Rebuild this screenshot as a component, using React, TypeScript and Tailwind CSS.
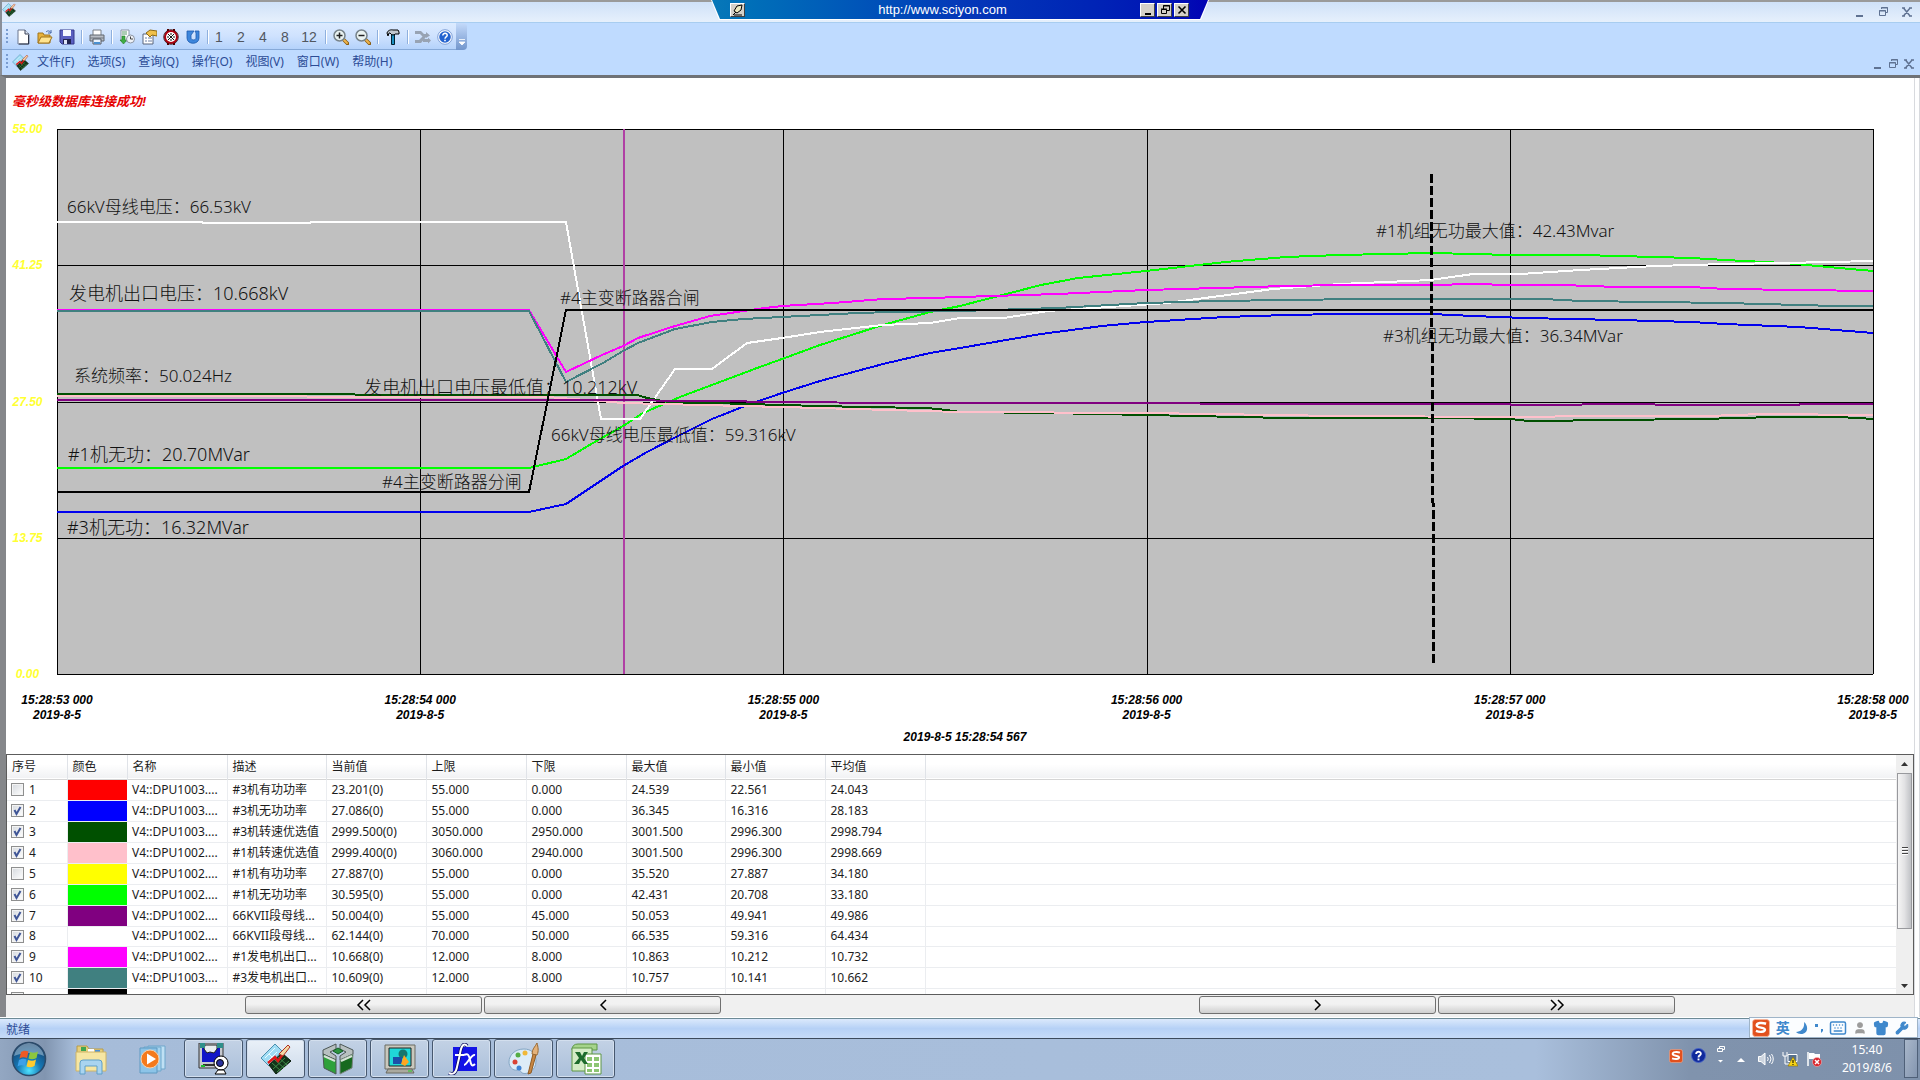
import React from 'react';
import { clsx } from 'clsx';
import { Keyboard, Shirt, User, Wrench } from 'lucide-react';

const UI_FONT = "font-['Noto_Sans','Noto_Sans_CJK_SC',sans-serif]";
const ARIAL = "font-['Liberation_Sans','Noto_Sans_CJK_SC',sans-serif]";

/* ---------- data ---------- */

const PLOT_W = 1816;
const PLOT_H = 545;

const yTicks = ['55.00', '41.25', '27.50', '13.75', '0.00'];

const xTicks = [
  '15:28:53 000',
  '15:28:54 000',
  '15:28:55 000',
  '15:28:56 000',
  '15:28:57 000',
  '15:28:58 000',
];

const series = [
  {
    color: '#00ff00',
    points:
      '0,339 472,339 509,330 536,314 566,297 586,284 623,268 663,253 700,239 725,230 763,216 826,196 873,183 903,177 984,156 1021,149 1089,142 1168,133 1229,128 1283,126 1374,124 1416,125 1453,126 1524,126 1561,127 1598,128 1635,129 1668,131 1727,134 1816,142',
  },
  {
    color: '#0000ee',
    points:
      '0,383 472,383 509,375 515,371 566,337 590,323 623,306 655,290 693,275 725,264 763,252 826,235 873,224 903,219 984,205 1045,197 1089,193 1168,188 1229,186 1283,185 1374,185 1416,187 1468,189 1561,191 1635,193 1668,195 1742,198 1816,204',
  },
  {
    color: '#ffffff',
    points:
      '0,93 145,93 146,94 253,94 254,93 490,93 491,93 509,93 544,290 583,290 618,240 655,240 690,214 725,209 763,203 826,196 873,194 903,189 947,189 991,182 1082,176 1110,174 1216,160 1283,155 1374,151 1416,145 1464,145 1524,141 1598,137 1669,135 1727,134 1816,132',
  },
  {
    color: '#ff00ff',
    points:
      '0,181 472,181 509,243 545,226 566,217 581,209 618,197 653,187 680,183 700,180 725,177 776,174 826,170 873,169 903,168 1000,165 1089,161 1160,159 1229,157 1283,156 1374,156 1416,155 1453,156 1505,156 1561,158 1635,158 1668,160 1742,161 1816,162',
  },
  {
    color: '#408080',
    points:
      '0,182 472,182 509,253 546,234 566,222 581,214 618,200 655,193 686,190 725,188 763,186 800,184 836,183 903,182 1000,179 1089,174 1160,172 1229,171 1306,170 1487,170 1524,172 1598,173 1668,174 1742,176 1779,177 1816,177',
  },
  {
    color: '#005000',
    points:
      '0,265 580,266 590,269 605,272 623,274 655,274 725,276 763,277 806,278 870,279 890,281 903,283 990,284 1089,286 1229,289 1379,289 1453,290 1472,292 1561,291 1635,290 1690,289 1709,288 1779,288 1802,289 1816,290',
  },
  {
    color: '#ffc0cb',
    points:
      '0,267 490,268 543,272 566,274 725,278 903,283 1089,284 1283,287 1453,288 1472,288 1524,287 1650,287 1705,285 1816,286',
  },
  {
    color: '#800080',
    points:
      '0,271 543,271 653,272 725,273 835,274 1000,274 1283,275 1453,275 1454,276 1524,276 1526,275 1596,275 1600,276 1742,276 1743,275 1816,275',
  },
  { color: '#000000', points: '0,363 472,363 509,181 1816,181' },
];

const annotations = [
  { x: 10, y: 77, text: '66kV母线电压：66.53kV' },
  { x: 12, y: 164, text: '发电机出口电压：10.668kV', large: true },
  { x: 17, y: 246, text: '系统频率：50.024Hz' },
  { x: 11, y: 325, text: '#1机无功：20.70MVar', large: true },
  { x: 10, y: 398, text: '#3机无功：16.32MVar', large: true },
  { x: 325, y: 352, text: '#4主变断路器分闸' },
  { x: 503, y: 168, text: '#4主变断路器合闸' },
  { x: 307, y: 258, text: '发电机出口电压最低值：10.212kV', large: true },
  { x: 494, y: 305, text: '66kV母线电压最低值：59.316kV' },
  { x: 1319, y: 101, text: '#1机组无功最大值：42.43Mvar' },
  { x: 1326, y: 206, text: '#3机组无功最大值：36.34MVar' },
];

const columns = ['序号', '颜色', '名称', '描述', '当前值', '上限', '下限', '最大值', '最小值', '平均值'];

type Row = { on: boolean; color: string; cells: string[] };

const rows: Row[] = [
  { on: false, color: 'bg-[#ff0000]', cells: ['V4::DPU1003....', '#3机有功功率', '23.201(0)', '55.000', '0.000', '24.539', '22.561', '24.043'] },
  { on: true, color: 'bg-[#0000ff]', cells: ['V4::DPU1003....', '#3机无功功率', '27.086(0)', '55.000', '0.000', '36.345', '16.316', '28.183'] },
  { on: true, color: 'bg-[#005000]', cells: ['V4::DPU1003....', '#3机转速优选值', '2999.500(0)', '3050.000', '2950.000', '3001.500', '2996.300', '2998.794'] },
  { on: true, color: 'bg-[#ffc0cb]', cells: ['V4::DPU1002....', '#1机转速优选值', '2999.400(0)', '3060.000', '2940.000', '3001.500', '2996.300', '2998.669'] },
  { on: false, color: 'bg-[#ffff00]', cells: ['V4::DPU1002....', '#1机有功功率', '27.887(0)', '55.000', '0.000', '35.520', '27.887', '34.180'] },
  { on: true, color: 'bg-[#00ff00]', cells: ['V4::DPU1002....', '#1机无功功率', '30.595(0)', '55.000', '0.000', '42.431', '20.708', '33.180'] },
  { on: true, color: 'bg-[#800080]', cells: ['V4::DPU1002....', '66KVII段母线...', '50.004(0)', '55.000', '45.000', '50.053', '49.941', '49.986'] },
  { on: true, color: 'bg-white', cells: ['V4::DPU1002....', '66KVII段母线...', '62.144(0)', '70.000', '50.000', '66.535', '59.316', '64.434'] },
  { on: true, color: 'bg-[#ff00ff]', cells: ['V4::DPU1002....', '#1发电机出口...', '10.668(0)', '12.000', '8.000', '10.863', '10.212', '10.732'] },
  { on: true, color: 'bg-[#408080]', cells: ['V4::DPU1003....', '#3发电机出口...', '10.609(0)', '12.000', '8.000', '10.757', '10.141', '10.662'] },
  { on: true, color: 'bg-black', cells: ['', '', '', '', '', '', '', ''] },
];

const menus = ['文件(F)', '选项(S)', '查询(Q)', '操作(O)', '视图(V)', '窗口(W)', '帮助(H)'];

/* ---------- icons ---------- */

const AppIcon = ({ className }: { className: string }) => (
  <svg viewBox="0 0 32 32" className={className}>
    <path d="M1 15 15 1l7 7L9 23z" fill="#9fdcf4" stroke="#4a8fae" />
    <path d="M5 15 15 5M8 18l9-9M9 11l6 6" stroke="#e8fbff" />
    <path d="M9 22 22 10l9 8-15 13z" fill="#123318" stroke="#0a1d0d" />
    <path d="m12 20 9 8M15 17l9 8M18 14l9 8M13 26l12-11M17 29l12-11" stroke="#3f8a4a" />
    <path d="m8 20 7-6 3 4 5-7" fill="none" stroke="#e01818" strokeWidth="2.5" />
    <path d="m19 11 9-9 2 2-7 9z" fill="#f3d6a2" stroke="#b03020" />
  </svg>
);

const NewIcon = () => (
  <svg viewBox="0 0 16 16" className="size-4">
    <path d="M3 1h7l4 4v10H3z" fill="#fff" stroke="#6a7690" />
    <path d="M10 1v4h4" fill="#dfe7f5" stroke="#3a4258" />
    <path d="M13.500 6v9H4" fill="none" stroke="#2f3648" />
  </svg>
);

const OpenIcon = () => (
  <svg viewBox="0 0 16 16" className="size-4">
    <path d="M1 14V4h5l1 2h6v8z" fill="#e8b23a" stroke="#a0741c" />
    <path d="m1 14 3-6h11l-3 6z" fill="#ffe48f" stroke="#a0741c" />
    <path d="M9 3c2-2 4-1 5 1m0-3v3h-3" fill="none" stroke="#4668a8" />
  </svg>
);

const SaveIcon = () => (
  <svg viewBox="0 0 16 16" className="size-4">
    <path d="M1 1h14v14H3l-2-2z" fill="#5a5fc0" stroke="#34388c" />
    <path d="M4 1h8v6H4z" fill="#f4f6ff" />
    <path d="M4 10h8v5H4z" fill="#22244f" />
    <path d="M5 11h3v4H5z" fill="#dfe4f8" />
  </svg>
);

const PrintIcon = () => (
  <svg viewBox="0 0 16 16" className="size-4">
    <path d="M4 1h8v6H4z" fill="#fff" stroke="#7a8088" />
    <path d="M1 6h14v6H1z" fill="#b9bec6" stroke="#60666e" />
    <path d="M1 9h14" stroke="#70767e" />
    <path d="M4 10h8v5H4z" fill="#e9f2fd" stroke="#555b64" />
    <path d="M5 13h6v2H5z" fill="#4a90d0" />
  </svg>
);

const ReportIcon = () => (
  <svg viewBox="0 0 16 16" className="size-4">
    <path d="M2 1h8v11H2z" fill="#fff" stroke="#8b95a5" />
    <path d="M3 3h5M3 5h5" stroke="#5a9a6a" />
    <path d="M3 7h3v4h2l-3.500 4L1 11h2z" fill="#3fae44" stroke="#237a2a" strokeWidth=".6" />
    <circle cx="11.500" cy="10" r="4" fill="#eef2f8" stroke="#8c95a3" />
    <path d="M11.500 7.500V10H14" fill="none" stroke="#444" />
  </svg>
);

const PropertyIcon = () => (
  <svg viewBox="0 0 16 16" className="size-4">
    <path d="M2 5h10v10H2z" fill="#fff" stroke="#59657c" />
    <path d="M4 9h2m1 0h4M4 12h2m1 0h4" stroke="#6d7fa5" />
    <path d="M5 4 9 1l7 1v5l-5-1-2 2z" fill="#f0c04a" stroke="#8d6a16" />
  </svg>
);

const ClockIcon = () => (
  <svg viewBox="0 0 16 16" className="size-4">
    <path d="M4 0h2v3H4zM10 0h2v3h-2zM4 13h2v3H4zM10 13h2v3h-2z" fill="#500" />
    <circle cx="8" cy="8" r="6" fill="#fff" stroke="#b00010" strokeWidth="2" />
    <circle cx="8" cy="8" r="7.300" fill="none" stroke="#300" strokeWidth=".8" />
    <path d="m5 5 6 6m0-6-6 6M8 4v2M8 10v2M4 8h2m4 0h2" stroke="#111" />
  </svg>
);

const RefreshIcon = () => (
  <svg viewBox="0 0 16 16" className="size-4">
    <path d="M2 2v7c0 7 12 7 12 0V2h-4l1 2v5c0 2.500-5 2.500-5 0V6l3-4z" fill="#3d86dc" stroke="#205cae" strokeWidth=".8" />
  </svg>
);

const ZoomIcon = ({ plus }: { plus?: boolean }) => (
  <svg viewBox="0 0 16 16" className="size-4">
    <path d="m10 10 4.500 4.500" stroke="#8a5d12" strokeWidth="3.500" strokeLinecap="round" />
    <path d="m11 11 3 3" stroke="#efb44c" strokeWidth="2" strokeLinecap="round" />
    <circle cx="6.500" cy="6.500" r="5.500" fill="#eaf3f2" stroke="#77838a" strokeWidth="1.500" />
    <path d={plus ? 'M3.500 6.500h6M6.500 3.500v6' : 'M3.500 6.500h6'} stroke="#222" strokeWidth="1.500" />
  </svg>
);

const HammerIcon = () => (
  <svg viewBox="0 0 16 16" className="size-4">
    <path d="M2 4c1-3 4-3.500 6-3h5l1 2v2h-4l-1 1H7L5 4H4L3 7z" fill="#c2c8cf" stroke="#000" />
    <path d="M6.500 6h3v9.500h-3z" fill="#1c8fc0" stroke="#02202e" />
  </svg>
);

const ShuffleIcon = () => (
  <svg viewBox="0 0 16 16" className="size-4" fill="#98a3b3">
    <path d="M0 2h6l3 3h2V3l4 3.500L11 9V8H8L5 5H0z" />
    <path d="M0 11h4l5-5 2 2-5 6H0z" />
    <path d="M8 10h5V8.500l3 3-3 3V13H8z" />
  </svg>
);

const HelpIcon = () => (
  <svg viewBox="0 0 16 16" className="size-4">
    <circle cx="8" cy="8" r="7.300" fill="#fff" stroke="#7f9fd6" />
    <circle cx="8" cy="8" r="5.800" fill="#2463cf" />
    <path d="M5.800 6.500C5.800 3.500 10.500 3.800 10.200 6.400 10 8 8 7.800 8 9.700" fill="none" stroke="#fff" strokeWidth="1.500" />
    <path d="M7.200 10.800h1.600v1.500H7.200z" fill="#fff" />
  </svg>
);

const SogouIcon = ({ className }: { className: string }) => (
  <svg viewBox="0 0 16 16" className={className}>
    <rect x=".5" y=".5" width="15" height="15" rx="2.500" fill="#e2501d" stroke="#f7b79c" strokeWidth=".6" />
    <path d="M12.500 4.200C9 3 4 3.200 4.200 5.800c.2 2.400 7.400 1.300 7.300 3.800-.1 2.300-5 2.200-8 1" fill="none" stroke="#fff" strokeWidth="2.200" />
  </svg>
);

const StartOrb = () => (
  <svg viewBox="0 0 36 36" className="size-9">
    <defs>
      <radialGradient id="orb" cx="50%" cy="85%" r="80%">
        <stop offset="0" stopColor="#4fe3ff" />
        <stop offset=".45" stopColor="#1577b4" />
        <stop offset="1" stopColor="#17406c" />
      </radialGradient>
    </defs>
    <circle cx="18" cy="18" r="16.500" fill="url(#orb)" stroke="#2c4a69" strokeWidth="1.500" />
    <path d="M3 15C5 5 14 2 18 2s13 3 15 13c-8-4-21-4-30 0z" fill="#cfe2ee" opacity=".45" />
    <path d="M10 11c3-2 5-1.500 7.500-.5L16 17c-2.500-1-5-1-7.500.5z" fill="#ee5a24" />
    <path d="M19 11c3 1 5 1 8-.5L25.500 17c-3 1.500-5 1.500-8 .5z" fill="#8cc63e" />
    <path d="M8 19c3-1.500 5-1.500 7.500-.5L14 25c-2.500-1-5-1-7.500.5z" fill="#3da0e8" />
    <path d="M17 19c3 1 5.500 1 8-.5L23.500 25c-3 1.500-5.500 1.500-8 .5z" fill="#ffcb2e" />
  </svg>
);

const FolderIcon = () => (
  <svg viewBox="0 0 32 32" className="size-8">
    <path d="M2 3h10l2 3h14v6H2z" fill="#e7cf7c" stroke="#b89c48" />
    <path d="M6 4h5v4H6z" fill="#3fa650" />
    <path d="M13 6h6v3h-6z" fill="#fff" />
    <path d="M20 7h5v3h-5z" fill="#4a90d8" />
    <path d="M1 9h30v19H1z" fill="#f6e6a3" stroke="#cdb468" />
    <path d="M5 31V20q0-3 3-3h16q3 0 3 3v11h-5v-8H10v8z" fill="#a9d4f0" stroke="#5f9fc8" />
  </svg>
);

const PlayerIcon = () => (
  <svg viewBox="0 0 32 32" className="size-8">
    <path d="M11 3h17v23H11z" fill="#bfe0f4" stroke="#6ea7cc" />
    <path d="M7 4h17v24H7z" fill="#a6d3ee" stroke="#6ea7cc" />
    <path d="M3 5h17v25H3z" fill="#8cc4e8" stroke="#5e9ac2" />
    <circle cx="13" cy="16" r="9" fill="#f47a1c" stroke="#fbd1a8" />
    <path d="M10 10.500v11l9-5.500z" fill="#fff" />
  </svg>
);

const MonitorIcon = () => (
  <svg viewBox="0 0 32 32" className="size-8">
    <path d="M1 0h24v25H1z" fill="#c6c9cf" stroke="#333" />
    <path d="M4 2h18v17H4z" fill="#1116c8" />
    <path d="M7 2h12v4l-3 4-4-1-3 1-3-4z" fill="#e9eef0" stroke="#222" />
    <path d="M2 0h5v5H2zM19 0h6v5h-6z" fill="#2f8f8a" />
    <path d="M5 21h16v2H5z" fill="#333" />
    <path d="M3 22h4v2H3z" fill="#20c030" />
    <circle cx="23" cy="20" r="7" fill="#fff" stroke="#000" />
    <circle cx="22" cy="20" r="3.500" fill="#28309c" stroke="#000" />
    <path d="m20 27-3 4h11l-2-4z" fill="#fff" stroke="#000" />
  </svg>
);

const CubeIcon = () => (
  <svg viewBox="0 0 32 32" className="size-8">
    <path d="M1 7 14 1v5L8 9l6 4v4L1 11zM31 7 18 1v5l6 3-6 4v4l13-6z" fill="#b8c0c0" stroke="#4c5654" />
    <path d="m11 8 5-3 5 3-5 3z" fill="#2c9440" stroke="#145f25" />
    <path d="m1 11 13 6v14L2 25z" fill="#2ea13a" stroke="#4c5654" />
    <path d="m31 11-13 6v14l12-6z" fill="#17691f" stroke="#7c8684" />
    <path d="m2 13 11 5M30 13l-11 5" stroke="#d6e4d8" strokeWidth="2" />
  </svg>
);

const ScreenIcon = () => (
  <svg viewBox="0 0 32 32" className="size-8">
    <path d="M1 2h30v24H1z" fill="#c9c8bd" stroke="#6a6a62" />
    <path d="M4 26h24l2 4H2z" fill="#aaa99f" stroke="#6a6a62" />
    <path d="M5 5h22v18H5z" fill="#20d8d8" stroke="#222" />
    <circle cx="19" cy="11" r="4.500" fill="#16766e" />
    <path d="M9 14h9v7H9z" fill="#1b50a8" />
    <path d="m17 21 3-9 5 7-4 4z" fill="#ffa620" />
    <path d="M24 28h4" stroke="#2c2" />
  </svg>
);

const FxIcon = () => (
  <svg viewBox="0 0 32 32" className="size-8">
    <path d="M7 4h24v24H7z" fill="#1414e6" />
    <path d="M21 3c-3-4-6 0-7 8l-3 13c-1 6-4 8-8 6" fill="none" stroke="#0a0a60" strokeWidth="3.500" />
    <path d="M21 3c-3-4-6 0-7 8l-3 13c-1 6-4 8-8 6M9 12h9" fill="none" stroke="#fff" strokeWidth="2" />
    <path d="M18 12c4-2 5 0 6 5s2 7 5 4M29 12c-4-1-8 10-11 10" fill="none" stroke="#fff" strokeWidth="2" />
  </svg>
);

const PaletteIcon = () => (
  <svg viewBox="0 0 32 32" className="size-8">
    <path d="M16 6C7 6 1 12 1 19c0 5 4 9 8 8 3-1 3 1 5 3 5 2 14-2 14-12 0-8-5-12-12-12z" fill="#dcecf8" stroke="#84a6c4" />
    <circle cx="7" cy="19" r="2.500" fill="#d94234" />
    <circle cx="10" cy="12" r="2.500" fill="#55ad45" />
    <circle cx="17" cy="10" r="2.500" fill="#f0b838" />
    <circle cx="11" cy="25" r="2.500" fill="#3d82d4" />
    <path d="m25 11 3 1-5 18-3 1z" fill="#c98742" stroke="#8f5a22" />
    <path d="M24 11c0-5 3-7 5-11 1 4 2 8 0 12z" fill="#e4b27a" stroke="#9a6a34" />
  </svg>
);

const ExcelIcon = () => (
  <svg viewBox="0 0 32 32" className="size-8">
    <path d="M2 7q0-6 6-6h19v6H2z" fill="#a5d38b" stroke="#5c9645" />
    <path d="M2 5h20v23H2z" fill="#d4ecc6" stroke="#5c9645" />
    <path d="M15 11h16v20H15z" fill="#fff" stroke="#5c9645" />
    <path d="M17 14h5v4h-5zM24 14h5v4h-5zM17 20h5v4h-5zM24 20h5v4h-5zM17 26h5v3h-5zM24 26h5v3h-5z" fill="#8cc572" />
    <path d="M5 9h5l2 4 2-4h4l-4 6 4 6h-4l-3-4-2 4H4l5-6z" fill="#1d6b2c" />
  </svg>
);

/* ---------- window chrome ---------- */

const Caption = ({ className }: { className?: string }) => (
  <div className={clsx('flex items-center text-[#5f7292]', className)}>
    <button type="button" aria-label="最小化" className="size-3">
      <svg viewBox="0 0 12 12" className="size-3"><path d="M3 9h7v2H3z" fill="currentColor" /></svg>
    </button>
    <button type="button" aria-label="还原" className="size-3">
      <svg viewBox="0 0 12 12" className="size-3" fill="none" stroke="currentColor">
        <path d="M4.500 3V1.500h6v5H9M4 2h7" />
        <path d="M2.500 4.500h6v5h-6zM2 5h7" />
      </svg>
    </button>
    <button type="button" aria-label="关闭" className="size-3">
      <svg viewBox="0 0 12 12" className="size-3"><path d="m2.500 2 6.500 8M9 2l-6.500 8M1 2h3M8 2h3M1 10h3M8 10h3" stroke="currentColor" strokeWidth="1.500" /></svg>
    </button>
  </div>
);

const classicButton = 'flex h-[14px] w-[15px] items-center justify-center border border-t-white border-r-[#404040] border-b-[#404040] border-l-white bg-[#d4d0c8]';

const RemoteBar = () => (
  <div className="absolute top-0 left-1/2 h-5 w-[498px] -translate-x-1/2 bg-white [clip-path:polygon(0_0,100%_0,490px_100%,8px_100%)]">
    <div className="flex h-[19px] items-center bg-linear-to-r from-[#0878b8] via-[#0638b8] to-[#0202b4] pr-5 pl-[19px] [clip-path:polygon(1px_0,497px_0,489px_100%,9px_100%)]">
      <button type="button" aria-label="固定" className={classicButton}>
        <svg viewBox="0 0 12 12" className="size-3"><path d="m5 2 5-1-1 5-4 3-3-2z" fill="#ece8c0" stroke="#000" /><path d="m1 11 3-3M2 11h8" stroke="#000" /></svg>
      </button>
      <span className={clsx('flex-1 text-center text-[13px] text-white', ARIAL)}>http://www.sciyon.com</span>
      <div className="flex gap-0.5">
        <button type="button" aria-label="最小化" className={classicButton}>
          <svg viewBox="0 0 12 12" className="size-3"><path d="M3 9h6v2H3z" /></svg>
        </button>
        <button type="button" aria-label="还原" className={classicButton}>
          <svg viewBox="0 0 12 12" className="size-3" fill="none" stroke="#000"><path d="M4.500 5V1.500h6v5H8M4 2h7M2.500 5.500h5v4h-5zM2 5h6" /></svg>
        </button>
        <button type="button" aria-label="关闭" className={classicButton}>
          <svg viewBox="0 0 12 12" className="size-3"><path d="m2.500 2.500 7 7m0-7-7 7" stroke="#000" strokeWidth="1.600" /></svg>
        </button>
      </div>
    </div>
  </div>
);

const Tool = ({ label, children }: { label: string; children: React.ReactNode }) => (
  <button type="button" aria-label={label} className="flex h-full w-[22px] items-center justify-center">
    {children}
  </button>
);

const Sep = () => <div className="mx-[3px] h-[14px] w-0.5 border-r border-r-white bg-[#8fb0de]" />;

const Grip = () => <div className="h-4 w-0.5 bg-[repeating-linear-gradient(#7a9cd0_0_2px,transparent_2px_4px)]" />;

const Toolbar = () => (
  <div className="flex h-[27px] bg-[#bfdbff]">
    <div className="flex items-center border-b border-[#86a9d8] bg-linear-to-b from-[#dcebff] via-[#cfe2fe] to-[#b4d2fb] pt-px pl-1">
      <Grip />
      <div className="flex h-full items-center pl-1">
        <Tool label="新建"><NewIcon /></Tool>
        <Tool label="打开"><OpenIcon /></Tool>
        <Tool label="保存"><SaveIcon /></Tool>
        <Sep />
        <Tool label="打印"><PrintIcon /></Tool>
        <Sep />
        <Tool label="报表"><ReportIcon /></Tool>
        <Tool label="属性"><PropertyIcon /></Tool>
        <Tool label="时间"><ClockIcon /></Tool>
        <Tool label="刷新"><RefreshIcon /></Tool>
        <Sep />
        <div className="-ml-1 flex">
          {['1', '2', '4', '8'].map((n) => (
            <button key={n} type="button" className={clsx('w-[22px] text-sm text-[#51565f]', ARIAL)}>{n}</button>
          ))}
          <button type="button" className={clsx('w-[26px] text-sm text-[#51565f]', ARIAL)}>12</button>
        </div>
        <Sep />
        <Tool label="放大"><ZoomIcon plus /></Tool>
        <Tool label="缩小"><ZoomIcon /></Tool>
        <Sep />
        <Tool label="设置"><HammerIcon /></Tool>
        <Sep />
        <Tool label="切换"><ShuffleIcon /></Tool>
        <Tool label="帮助"><HelpIcon /></Tool>
      </div>
    </div>
    <button type="button" aria-label="更多" className="flex w-[11px] items-end justify-center rounded-r bg-linear-to-b from-[#c4dafa] to-[#7296cc] pb-1">
      <svg viewBox="0 0 8 8" className="size-2"><path d="M1 1.500h6M1 4h6L4 7z" fill="#fff" stroke="#fff" strokeWidth=".8" /></svg>
    </button>
  </div>
);

const MenuBar = () => (
  <div className="flex h-[25px] items-center bg-[#bfdbff] pr-[5px] pb-px pl-1">
    <Grip />
    <AppIcon className="mr-2 ml-1 size-[17px]" />
    <nav className="flex flex-1 gap-[13px]">
      {menus.map((m) => (
        <button key={m} type="button" className="text-xs text-[#2c4c96]">{m}</button>
      ))}
    </nav>
    <Caption className="gap-1 pt-1" />
  </div>
);

/* ---------- trend chart ---------- */

const Plot = () => (
  <div className="relative flex-1 bg-[#c0c0c0]">
    <svg viewBox={`0 0 ${PLOT_W} ${PLOT_H}`} preserveAspectRatio="none" shapeRendering="crispEdges" className="block size-full overflow-visible">
      {[0, 1, 2, 3, 4].map((i) => (
        <line key={i} x1="0" x2={PLOT_W} y1={Math.round((i * PLOT_H) / 4) + 0.5} y2={Math.round((i * PLOT_H) / 4) + 0.5} stroke="#000" />
      ))}
      {[0, 1, 2, 3, 4, 5].map((i) => (
        <line key={i} y1="0" y2={PLOT_H} x1={Math.round((i * PLOT_W) / 5) + 0.5} x2={Math.round((i * PLOT_W) / 5) + 0.5} stroke="#000" />
      ))}
      <line x1="567" x2="567" y1="0" y2={PLOT_H} stroke="#b040a4" strokeWidth="2" />
      {series.map((s) => (
        <polyline key={s.color} points={s.points} fill="none" stroke={s.color} strokeWidth="2" />
      ))}
      <line x1="1374" y1="45" x2="1377" y2="536" stroke="#000" strokeWidth="3" strokeDasharray="9 3" />
    </svg>
    {annotations.map((a) => (
      <span
        key={a.text}
        className={clsx(
          'absolute -translate-y-1/2 leading-none font-light whitespace-nowrap text-[#111]',
          a.large ? 'text-[18px]' : 'text-[17px]',
        )}
        style={{ left: `${(a.x / PLOT_W) * 100}%`, top: `${(a.y / PLOT_H) * 100}%` }}
      >
        {a.text}
      </span>
    ))}
  </div>
);

const TrendChart = () => (
  <section className={clsx('flex min-h-0 flex-1 flex-col bg-white pr-[41px] text-xs font-bold italic', ARIAL)}>
    <div className="h-[51px] pt-[15px] pl-1.5 text-[13px] leading-[18px] text-[#e60000]">毫秒级数据库连接成功!</div>
    <div className="flex min-h-0 flex-1">
      <div className="flex w-[51px] flex-col justify-between pl-1.5 text-[#ffff33]">
        {yTicks.map((t) => (
          <div key={t} className="flex h-0 w-[31px] items-center justify-center">{t}</div>
        ))}
      </div>
      <div className={clsx('flex flex-1 font-normal not-italic', UI_FONT)}>
        <Plot />
      </div>
    </div>
    <div className="h-20 pt-[19px] pl-[51px]">
      <div className="flex justify-between">
        {xTicks.map((t) => (
          <div key={t} className="flex w-0 justify-center">
            <div className="text-center leading-[15px] whitespace-nowrap">
              {t}
              <br />
              2019-8-5
            </div>
          </div>
        ))}
      </div>
      <p className="mt-[7px] text-center leading-[15px]">2019-8-5 15:28:54 567</p>
    </div>
  </section>
);

/* ---------- point table ---------- */

const PointTable = () => (
  <section className="flex h-[241px] overflow-hidden border border-[#5c5c5c] bg-white">
    <div className="min-w-0 flex-1 overflow-hidden">
      <table className="w-full table-fixed border-collapse text-left text-xs text-[#1c1c1c]">
        <colgroup>
          <col className="w-[60px]" />
          <col className="w-[60px]" />
          <col className="w-[100px]" />
          <col className="w-[99px]" />
          <col className="w-[100px]" />
          <col className="w-[100px]" />
          <col className="w-[100px]" />
          <col className="w-[99px]" />
          <col className="w-[100px]" />
          <col className="w-[100px]" />
          <col />
        </colgroup>
        <thead>
          <tr className="h-6 border-b border-[#d5d5d5] bg-linear-to-b from-white from-40% to-[#f1f2f4]">
            {columns.map((c) => (
              <th key={c} className="border-r border-[#e0e3e8] p-0 pl-[5px] leading-4 font-normal">{c}</th>
            ))}
            <th className="p-0" />
          </tr>
        </thead>
        <tbody>
          {rows.map((r, i) => (
            <tr key={i} className={clsx('border-b border-[#ebedf0]', r.color === 'bg-white' ? 'h-5' : 'h-[21px]')}>
              <td className="border-r border-[#ebedf0] p-0 pl-1 leading-4">
                <label className="flex items-center gap-[5px]">
                  <span className="relative size-[13px]">
                    <input
                      type="checkbox"
                      defaultChecked={r.on}
                      aria-label={columns[0]}
                      className="peer block size-[13px] appearance-none border border-[#8e8f8f] bg-linear-to-br from-[#d5d9de] to-white shadow-[inset_0_0_0_1px_#f4f4f4]"
                    />
                    <svg viewBox="0 0 13 13" className="pointer-events-none absolute inset-0 hidden size-[13px] peer-checked:block">
                      <path d="m3.500 6 2 4 4-7" fill="none" stroke="#3f5596" strokeWidth="2" />
                    </svg>
                  </span>
                  {r.cells[0] && i + 1}
                </label>
              </td>
              <td className="p-0">
                <div className={clsx(r.color === 'bg-white' ? 'h-[19px]' : 'h-5', r.color)} />
              </td>
              {r.cells.map((c, j) => (
                <td key={j} className="overflow-hidden border-r border-[#ebedf0] p-0 pl-[5px] leading-4 whitespace-nowrap">{c}</td>
              ))}
              <td className="p-0" />
            </tr>
          ))}
        </tbody>
      </table>
    </div>
    <div className="flex w-[17px] flex-col bg-[#efefef] px-px">
      <button type="button" aria-label="向上滚动" className="flex h-[18px] items-center justify-center">
        <svg viewBox="0 0 7 4" className="h-1 w-[7px]"><path d="M0 4h7L3.500 0z" fill="#333" /></svg>
      </button>
      <div className="flex h-[156px] flex-col items-center justify-center gap-px border border-[#98999d] bg-linear-to-r from-[#f5f5f5] via-[#e2e2e4] to-[#c0c2c6]">
        <span className="h-0.5 w-1.5 border-t border-[#444] bg-white" />
        <span className="h-0.5 w-1.5 border-t border-[#444] bg-white" />
        <span className="h-0.5 w-1.5 border-t border-[#444] bg-white" />
      </div>
      <div className="flex-1" />
      <button type="button" aria-label="向下滚动" className="flex h-[17px] items-center justify-center">
        <svg viewBox="0 0 7 4" className="h-1 w-[7px]"><path d="M0 0h7L3.500 4z" fill="#333" /></svg>
      </button>
    </div>
  </section>
);

const arrows: Record<string, string> = {
  '快退': 'M8 1 3 6l5 5M15 1l-5 5 5 5',
  '后退': 'M12 1 7 6l5 5',
  '前进': 'm6 1 5 5-5 5',
  '快进': 'm3 1 5 5-5 5M10 1l5 5-5 5',
};

const PageButton = ({ label }: { label: string }) => (
  <button
    type="button"
    aria-label={label}
    className="flex h-[18px] w-[237px] items-center justify-center rounded-[3px] border border-[#707070] bg-linear-to-b from-[#f2f2f2] from-45% to-[#cfcfcf]"
  >
    <svg viewBox="0 0 18 12" className="h-3 w-[18px]"><path d={arrows[label]} fill="none" stroke="#000" strokeWidth="1.500" /></svg>
  </button>
);

const Pager = () => (
  <div className="flex h-[22px] items-start justify-between bg-[#f0f0f0] px-[239px] pt-px">
    <div className="flex gap-0.5">
      <PageButton label="快退" />
      <PageButton label="后退" />
    </div>
    <div className="flex gap-0.5">
      <PageButton label="前进" />
      <PageButton label="快进" />
    </div>
  </div>
);

/* ---------- desktop ---------- */

const ImeBar = () => (
  <div className="absolute right-0.5 bottom-0 flex h-[21px] w-[169px] items-center justify-between border border-[#9fb4c8] bg-[#fbfdff] pr-2 pl-0.5 text-[#3f88cc]">
    <SogouIcon className="size-[18px]" />
    <span className="text-sm leading-none font-bold">英</span>
    <svg viewBox="0 0 12 12" className="size-3"><path d="M8 0c5 4 4 12-3 12-2 0-4-1-5-2 5 0 9-4 8-10z" fill="currentColor" /></svg>
    <svg viewBox="0 0 10 12" className="h-3 w-2.5"><path d="M1 2h3v3H1zM7 7h2v2L7 11z" fill="currentColor" /></svg>
    <Keyboard className="size-[18px]" />
    <User className="size-3.5 text-[#9c9c9c]" fill="currentColor" />
    <Shirt className="size-4" fill="currentColor" />
    <Wrench className="size-3.5" fill="currentColor" />
  </div>
);

const StatusBar = () => (
  <div className="relative flex h-5 items-center border-t border-[#6d8a96] bg-linear-to-b from-[#dbe9fc] via-[#b6d1f6] to-[#c6dbf8] pt-0.5 pl-1.5 text-xs text-[#2c4c96]">
    就绪
    <ImeBar />
  </div>
);

const tasks = [
  { name: '远程监视', icon: <MonitorIcon /> },
  { name: '趋势', icon: <AppIcon className="size-8" />, active: true },
  { name: '数据库', icon: <CubeIcon /> },
  { name: '画面', icon: <ScreenIcon /> },
  { name: '函数', icon: <FxIcon /> },
  { name: '画图', icon: <PaletteIcon /> },
  { name: 'Excel', icon: <ExcelIcon /> },
];

const Tray = () => (
  <div className="ml-auto flex h-full items-center text-white">
    <SogouIcon className="mr-2 mb-1.5 size-3.5" />
    <svg viewBox="0 0 16 16" className="mr-[10px] mb-1.5 size-[15px]">
      <circle cx="8" cy="8" r="7.500" fill="#102a9c" stroke="#4a66c8" />
      <path d="M5.500 6.500C5.500 3 10.800 3.300 10.500 6.400 10.300 8 8 7.800 8 10" fill="none" stroke="#fff" strokeWidth="2" />
      <path d="M7 11.200h2v2H7z" fill="#fff" />
    </svg>
    <svg viewBox="0 0 10 18" className="mr-[11px] mb-2 h-[18px] w-2.5" fill="none" stroke="#fff">
      <path d="M3.500 2.500v-2h5v3h-2M1.500 2.500h5v3h-5z" />
      <path d="M2 14h5l-2.500 2.500z" fill="#fff" stroke="none" />
    </svg>
    <svg viewBox="0 0 8 4" className="mt-0.5 mr-[13px] h-1 w-2"><path d="M0 4h8L4 0z" fill="#fff" /></svg>
    <svg viewBox="0 0 16 16" className="mr-2 size-4" fill="none" stroke="#fff">
      <path d="M.5 5.500H3L7 2v12l-4-3.500H.5z" fill="#cdd5df" />
      <path d="M9.500 6q1.500 2 0 4M11.500 4q3 4 0 8M13.500 3q3.500 5 0 10" />
    </svg>
    <svg viewBox="0 0 16 16" className="mr-2 size-4">
      <path d="M1 1v4h4V1M3 5v8h7" fill="none" stroke="#fff" />
      <path d="M6 3.500h9v7H6z" fill="#56708c" stroke="#fff" />
      <path d="m11 6 5 9H6z" fill="#f7d417" stroke="#8a6c00" strokeWidth=".6" />
      <path d="M10.500 9h1v3h-1zM10.500 13h1v1h-1z" />
    </svg>
    <svg viewBox="0 0 16 16" className="mr-5 size-4">
      <path d="M2 1v14" stroke="#fff" strokeWidth="1.500" />
      <path d="M3 2h5l1 1h5v6H9L8 8H3z" fill="#fff" />
      <circle cx="11" cy="11" r="4.500" fill="#d8232a" stroke="#f3b9bb" strokeWidth=".6" />
      <path d="m9 9 4 4m0-4-4 4" stroke="#fff" strokeWidth="1.500" />
    </svg>
    <div className="mr-3 text-center text-xs leading-[18px]">
      15:40
      <br />
      2019/8/6
    </div>
    <button type="button" aria-label="显示桌面" className="mr-0.5 h-[39px] w-[14px] border border-[#4f6078] bg-linear-to-br from-[#a9b7ca] to-[#8496b0]" />
  </div>
);

const Taskbar = () => (
  <footer className="flex h-[42px] items-center border-t border-[#3c4a5c] bg-[linear-gradient(90deg,#93a7c2_0,#8195b0_45px,#a6bcd9_75px,#a9bfdc_80%,#8093ad_88%,#7e91ab_100%)] pb-0.5 pl-[11px]">
    <button type="button" aria-label="开始"><StartOrb /></button>
    <button type="button" aria-label="资源管理器" className="ml-[28px]"><FolderIcon /></button>
    <button type="button" aria-label="播放器" className="mr-[15px] ml-[30px]"><PlayerIcon /></button>
    <div className="flex gap-[3px]">
      {tasks.map((t) => (
        <button
          key={t.name}
          type="button"
          aria-label={t.name}
          className={clsx(
            'flex h-[39px] w-[59px] items-center justify-center rounded-[3px] border border-[#47586f] shadow-[inset_0_0_0_1px_#d3dfee]',
            t.active ? 'bg-linear-to-b from-[#e9f0f8] to-[#cbd9ea]' : 'bg-linear-to-b from-[#c3d2e5] to-[#aabfda]',
          )}
        >
          {t.icon}
        </button>
      ))}
    </div>
    <Tray />
  </footer>
);

export default function App() {
  return (
    <div className={clsx('relative flex h-screen flex-col overflow-hidden bg-white', UI_FONT)}>
      <header className="border-l-2 border-[#8a8f98]">
        <div className="flex h-[23px] items-center justify-between border-t-2 border-b border-t-[#9a9a9a] border-b-[#a8cdf0] bg-linear-to-b from-[#cfe1f8] to-[#e6f0fc] pr-[7px]">
          <AppIcon className="mb-1 size-3.5" />
          <Caption className="gap-3" />
        </div>
        <Toolbar />
        <MenuBar />
      </header>
      <RemoteBar />

      <main className="flex min-h-0 flex-1 flex-col border-t-[3px] border-l-6 border-t-[#6f7276] border-l-[#85878a]">
        <div className="flex min-h-0 flex-1">
          <div className="flex min-w-0 flex-1 flex-col">
            <TrendChart />
            <PointTable />
            <Pager />
          </div>
          <div className="w-[6px] border-x border-[#d8dade] bg-white" />
        </div>
      </main>
      <div className="h-px bg-white" />
      <StatusBar />
      <Taskbar />
    </div>
  );
}
